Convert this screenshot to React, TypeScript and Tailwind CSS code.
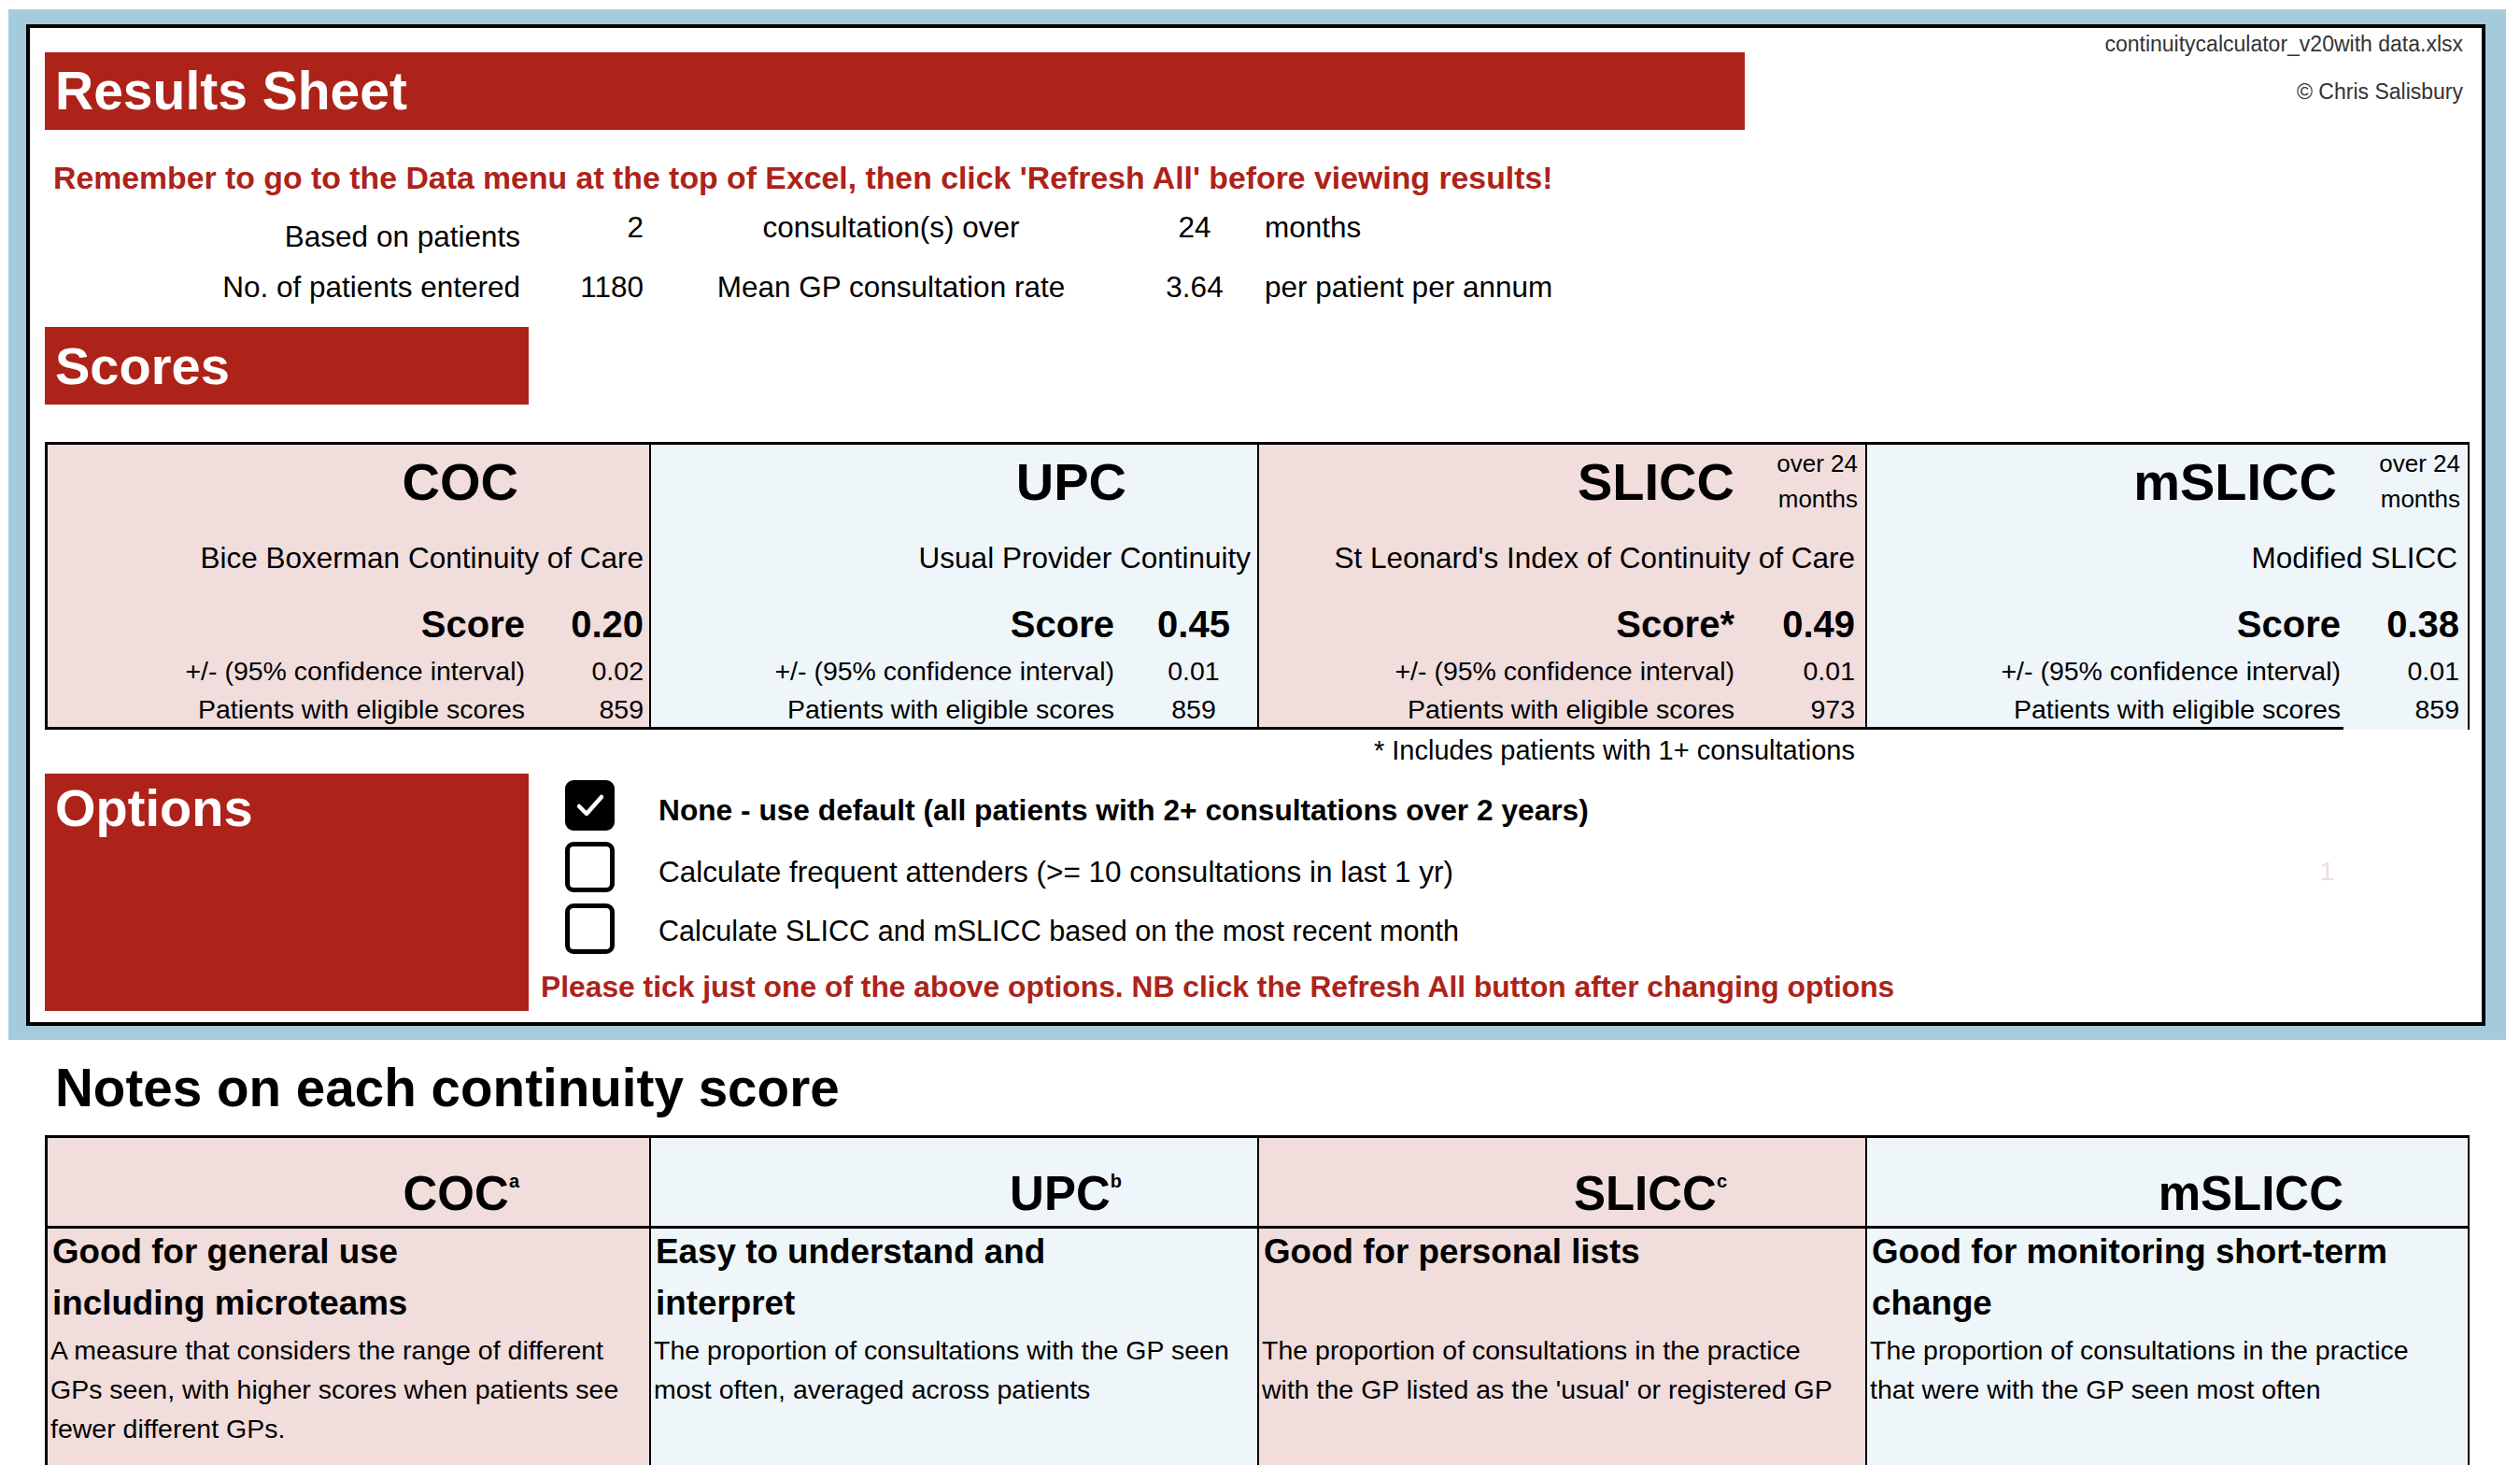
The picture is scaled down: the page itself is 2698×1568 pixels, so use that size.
import React from "react";

type ScoreCol = {
  name: string;
  bg: string;
  desc: string;
  descPr: string;
  scoreLabel: string;
  score: string;
  ci: string;
  n: string;
  over: boolean;
  valBox: string;
  valPr: string;
  borderB: boolean;
  width: string;
};

const scoreCols: ScoreCol[] = [
  {
    name: "COC",
    bg: "bg-[#f0dddc]",
    desc: "Bice Boxerman Continuity of Care",
    descPr: "pr-[6px]",
    scoreLabel: "Score",
    score: "0.20",
    ci: "0.02",
    n: "859",
    over: false,
    valBox: "w-[127px] text-right",
    valPr: "pr-[6px]",
    borderB: true,
    width: "w-[646px]",
  },
  {
    name: "UPC",
    bg: "bg-[#eef6f9]",
    desc: "Usual Provider Continuity",
    descPr: "pr-[7px]",
    scoreLabel: "Score",
    score: "0.45",
    ci: "0.01",
    n: "859",
    over: false,
    valBox: "w-[136px] ml-[17px] text-center",
    valPr: "pr-[0px]",
    borderB: true,
    width: "w-[651px]",
  },
  {
    name: "SLICC",
    bg: "bg-[#f0dddc]",
    desc: "St Leonard's Index of Continuity of Care",
    descPr: "pr-[11px]",
    scoreLabel: "Score*",
    score: "0.49",
    ci: "0.01",
    n: "973",
    over: true,
    valBox: "w-[129px] text-right",
    valPr: "pr-[11px]",
    borderB: true,
    width: "w-[651px]",
  },
  {
    name: "mSLICC",
    bg: "bg-[#eef6f9]",
    desc: "Modified SLICC",
    descPr: "pr-[11px]",
    scoreLabel: "Score",
    score: "0.38",
    ci: "0.01",
    n: "859",
    over: true,
    valBox: "w-[127px] text-right",
    valPr: "pr-[9px]",
    borderB: false,
    width: "w-[645px]",
  },
];

type NoteCol = {
  name: string;
  sup: string;
  bg: string;
  width: string;
  headPr: string;
  title: string[];
  body: string[];
};

const noteCols: NoteCol[] = [
  {
    name: "COC",
    sup: "a",
    bg: "bg-[#f0dddc]",
    width: "w-[646px]",
    headPr: "pr-[139px]",
    title: ["Good for general use", "including microteams"],
    body: [
      "A measure that considers the range of different",
      "GPs seen, with higher scores when patients see",
      "fewer different GPs.",
    ],
  },
  {
    name: "UPC",
    sup: "b",
    bg: "bg-[#eef6f9]",
    width: "w-[651px]",
    headPr: "pr-[145px]",
    title: ["Easy to understand and", "interpret"],
    body: [
      "The proportion of consultations with the GP seen",
      "most often, averaged across patients",
    ],
  },
  {
    name: "SLICC",
    sup: "c",
    bg: "bg-[#f0dddc]",
    width: "w-[651px]",
    headPr: "pr-[148px]",
    title: ["Good for personal lists"],
    body: [
      "The proportion of consultations in the practice",
      "with the GP listed as the 'usual' or registered GP",
    ],
  },
  {
    name: "mSLICC",
    sup: "",
    bg: "bg-[#eef6f9]",
    width: "w-[645px]",
    headPr: "pr-[133px]",
    title: ["Good for monitoring short-term", "change"],
    body: [
      "The proportion of consultations in the practice",
      "that were with the GP seen most often",
    ],
  },
];

function Checkbox({ checked }: { checked: boolean }) {
  return (
    <div
      className={
        checked
          ? "w-[53px] h-[54px] rounded-[9px] border-[5px] border-black bg-black flex items-center justify-center"
          : "w-[53px] h-[54px] rounded-[9px] border-[5px] border-black bg-white"
      }
    >
      {checked && (
        <svg width="34" height="30" viewBox="0 0 34 30">
          <polyline
            points="5,16 13,24 29,6"
            fill="none"
            stroke="white"
            strokeWidth="4.5"
            strokeLinecap="round"
            strokeLinejoin="round"
          />
        </svg>
      )}
    </div>
  );
}

function ScoreCell({ c }: { c: ScoreCol }) {
  return (
    <div
      className={
        c.borderB
          ? `${c.width} ${c.bg} border-r-2 border-black border-b-[3px] flex flex-col`
          : `${c.width} ${c.bg} border-r-2 border-black flex flex-col`
      }
    >
      <div className="h-[302px] flex flex-col">
        {/* heading row */}
        <div className="h-[80px] flex justify-end items-start">
          <div className="h-[80px] flex items-center text-[56px] font-bold leading-[64px]">{c.name}</div>
          <div className="w-[140px] h-[80px] pr-[8px] pt-[1px] text-right text-[26px] leading-[38px]">
            {c.over ? (
              <>
                <div>over 24</div>
                <div>months</div>
              </>
            ) : null}
          </div>
        </div>
        {/* description */}
        <div className={`mt-[22px] h-[40px] flex items-center justify-end text-[31.5px] ${c.descPr}`}>
          {c.desc}
        </div>
        {/* score */}
        <div className={`mt-[28px] h-[44px] flex items-center justify-end font-bold text-[40px] ${c.valPr}`}>
          <span>{c.scoreLabel}</span>
          <span className={c.valBox}>{c.score}</span>
        </div>
        {/* ci */}
        <div className={`mt-[10px] h-[36px] flex items-center justify-end text-[28.5px] ${c.valPr}`}>
          <span>+/- (95% confidence interval)</span>
          <span className={c.valBox}>{c.ci}</span>
        </div>
        {/* patients */}
        <div className={`mt-[5px] h-[36px] flex items-center justify-end text-[28.5px] ${c.valPr}`}>
          <span>Patients with eligible scores</span>
          <span className={c.valBox}>{c.n}</span>
        </div>
      </div>
      {!c.borderB && <div className="w-[510px] h-[3px] bg-black" />}
    </div>
  );
}

function NoteCell({ c }: { c: NoteCol }) {
  return (
    <div className={`${c.width} ${c.bg} border-r-2 border-black flex flex-col`}>
      <div className={`h-[97px] border-b-[3px] border-black flex items-end justify-end pb-[8px] ${c.headPr}`}>
        <span className="text-[51px] font-bold leading-[52px]">{c.name}</span>
        {c.sup && (
          <span className="text-[20px] font-bold leading-none self-start relative top-[36px]">
            {c.sup}
          </span>
        )}
      </div>
      <div className="h-[110px] -mt-[3px] pl-[5px] text-[36.8px] font-bold leading-[55px]">
        {c.title.map((t) => (
          <div key={t}>{t}</div>
        ))}
      </div>
      <div className="mt-[2px] pl-[3px] text-[28.5px] leading-[42px]">
        {c.body.map((t) => (
          <div key={t}>{t}</div>
        ))}
      </div>
    </div>
  );
}

export default function App() {
  return (
    <div className="w-[2698px] h-[1568px] bg-white overflow-hidden text-black [font-family:'Liberation_Sans',Arial,sans-serif]">
      {/* Blue framed results sheet */}
      <div className="ml-[9px] mt-[10px] w-[2674px] h-[1103px] bg-[#a3cbdb] pt-[16px] pl-[19px] pr-[22px] pb-[15px]">
        <div className="w-full h-full border-4 border-black bg-white flex flex-col">
          {/* Title row */}
          <div className="h-[110px] flex">
            <div className="ml-[16px] mt-[26px] w-[1820px] h-[83px] bg-[#ad2319] flex items-center pl-[11px] text-white font-bold text-[57px] leading-none">
              Results Sheet
            </div>
            <div className="flex-1 pr-[20px] text-right text-[23px] text-[#333333]">
              <div className="mt-[2px] leading-[30px]">continuitycalculator_v20with data.xlsx</div>
              <div className="mt-[21px] leading-[30px]">© Chris Salisbury</div>
            </div>
          </div>

          {/* Warning */}
          <div className="mt-[30px] h-[40px] flex items-center pl-[25px] text-[33.8px] font-bold text-[#ad2319]">
            Remember to go to the Data menu at the top of Excel, then click 'Refresh All' before viewing results!
          </div>

          {/* Info row 1 */}
          <div className="h-[70px] flex items-start text-[31.5px]">
            <div className="w-[525px] mt-[23px] leading-[40px] text-right">Based on patients</div>
            <div className="w-[132px] mt-[13px] leading-[40px] text-right">2</div>
            <div className="w-[530px] mt-[13px] leading-[40px] text-center">consultation(s) over</div>
            <div className="w-[120px] mt-[13px] leading-[40px] text-center">24</div>
            <div className="ml-[15px] mt-[13px] leading-[40px]">months</div>
          </div>
          {/* Info row 2 */}
          <div className="h-[50px] flex items-start text-[31.5px]">
            <div className="w-[525px] mt-[7px] leading-[40px] text-right">No. of patients entered</div>
            <div className="w-[132px] mt-[7px] leading-[40px] text-right">1180</div>
            <div className="w-[530px] mt-[7px] leading-[40px] text-center">Mean GP consultation rate</div>
            <div className="w-[120px] mt-[7px] leading-[40px] text-center">3.64</div>
            <div className="ml-[15px] mt-[7px] leading-[40px]">per patient per annum</div>
          </div>

          {/* Scores header */}
          <div className="ml-[16px] mt-[20px] w-[518px] h-[83px] bg-[#ad2319] flex items-center pl-[11px] text-white font-bold text-[56px] leading-none">
            Scores
          </div>

          {/* Scores table */}
          <div className="ml-[16px] mt-[40px] w-[2596px] h-[308px] border-t-[3px] border-l-[3px] border-black flex">
            {scoreCols.map((c) => (
              <ScoreCell key={c.name} c={c} />
            ))}
          </div>

          {/* footnote */}
          <div className="h-[46px] flex items-center justify-end pr-[671px] text-[29px]">
            * Includes patients with 1+ consultations
          </div>

          {/* Options */}
          <div className="mt-[1px] flex">
            <div className="ml-[16px] w-[518px] h-[254px] bg-[#ad2319] pl-[11px] pt-[5px] text-white font-bold text-[56px] leading-[64px]">
              Options
            </div>
            <div className="ml-[13px] flex-1 flex flex-col">
              <div className="mt-[1px] h-[66px] flex items-center pl-[26px]">
                <Checkbox checked={true} />
                <div className="ml-[47px] mt-[10px] leading-[40px] text-[31.7px] font-bold">
                  None - use default (all patients with 2+ consultations over 2 years)
                </div>
              </div>
              <div className="h-[66px] flex items-center pl-[26px]">
                <Checkbox checked={false} />
                <div className="ml-[47px] mt-[10px] leading-[40px] text-[31.5px]">
                  Calculate frequent attenders (&gt;= 10 consultations in last 1 yr)
                </div>
                <div className="ml-auto mr-[158px] mt-[10px] leading-[40px] text-[28px] text-[#ecdfdf]">1</div>
              </div>
              <div className="h-[66px] flex items-center pl-[26px]">
                <Checkbox checked={false} />
                <div className="ml-[47px] mt-[4px] leading-[40px] text-[30.6px]">
                  Calculate SLICC and mSLICC based on the most recent month
                </div>
              </div>
              <div className="h-[60px] flex items-center text-[31.8px] font-bold text-[#ad2319]">
                Please tick just one of the above options. NB click the Refresh All button after changing options
              </div>
            </div>
          </div>
        </div>
      </div>

      {/* Notes */}
      <div className="ml-[59px] mt-[20px] h-[64px] flex items-center text-[56.6px] font-bold leading-none">
        Notes on each continuity score
      </div>
      <div className="ml-[48px] mt-[18px] w-[2596px] h-[400px] border-t-[3px] border-l-[3px] border-black flex">
        {noteCols.map((c) => (
          <NoteCell key={c.name} c={c} />
        ))}
      </div>
    </div>
  );
}
